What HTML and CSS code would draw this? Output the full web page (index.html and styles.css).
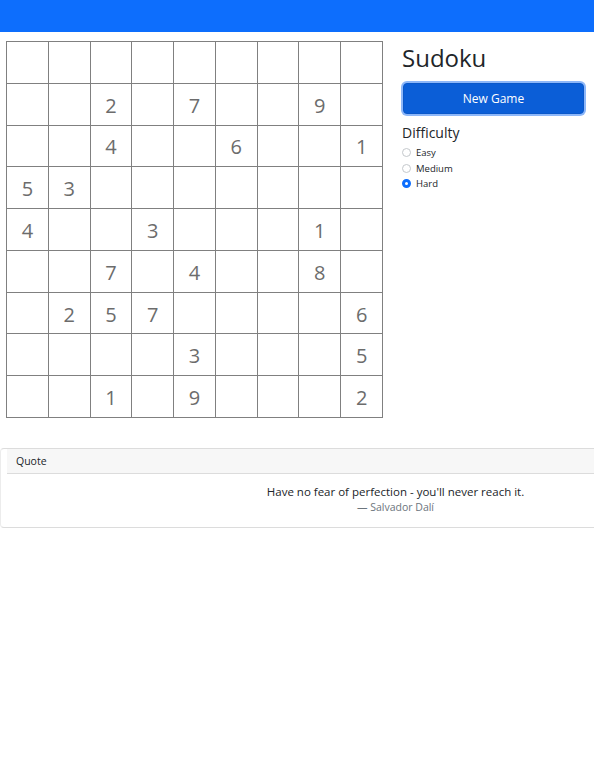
FILE: index.html
```html
<!DOCTYPE html>
<html>
<head>
<meta charset="utf-8">
<link rel="stylesheet" href="styles.css">
</head>
<body>
<div class="navbar"></div>
<div class="main">
  <div class="board">
    <div class="c"></div><div class="c"></div><div class="c"></div><div class="c"></div><div class="c"></div><div class="c"></div><div class="c"></div><div class="c"></div><div class="c"></div>
    <div class="c"></div><div class="c"></div><div class="c">2</div><div class="c"></div><div class="c">7</div><div class="c"></div><div class="c"></div><div class="c">9</div><div class="c"></div>
    <div class="c"></div><div class="c"></div><div class="c">4</div><div class="c"></div><div class="c"></div><div class="c">6</div><div class="c"></div><div class="c"></div><div class="c">1</div>
    <div class="c">5</div><div class="c">3</div><div class="c"></div><div class="c"></div><div class="c"></div><div class="c"></div><div class="c"></div><div class="c"></div><div class="c"></div>
    <div class="c">4</div><div class="c"></div><div class="c"></div><div class="c">3</div><div class="c"></div><div class="c"></div><div class="c"></div><div class="c">1</div><div class="c"></div>
    <div class="c"></div><div class="c"></div><div class="c">7</div><div class="c"></div><div class="c">4</div><div class="c"></div><div class="c"></div><div class="c">8</div><div class="c"></div>
    <div class="c"></div><div class="c">2</div><div class="c">5</div><div class="c">7</div><div class="c"></div><div class="c"></div><div class="c"></div><div class="c"></div><div class="c">6</div>
    <div class="c"></div><div class="c"></div><div class="c"></div><div class="c"></div><div class="c">3</div><div class="c"></div><div class="c"></div><div class="c"></div><div class="c">5</div>
    <div class="c"></div><div class="c"></div><div class="c">1</div><div class="c"></div><div class="c">9</div><div class="c"></div><div class="c"></div><div class="c"></div><div class="c">2</div>
  </div>
  <div class="side">
    <h1 class="title">Sudoku</h1>
    <button class="btn">New Game</button>
    <div class="diff-label">Difficulty</div>
    <div class="radios">
      <div class="opt"><span class="radio"></span><span>Easy</span></div>
      <div class="opt"><span class="radio"></span><span>Medium</span></div>
      <div class="opt"><span class="radio checked"></span><span>Hard</span></div>
    </div>
  </div>
</div>
<div class="card">
  <div class="card-header">Quote</div>
  <div class="card-body">
    <div class="quote">Have no fear of perfection - you'll never reach it.</div>
    <div class="author">— Salvador Dalí</div>
  </div>
</div>
</body>
</html>
```
FILE: styles.css
```css
html, body {
  margin: 0;
  padding: 0;
  background: #fff;
  font-family: "Open Sans", "Noto Sans", sans-serif;
  color: #212529;
  overflow: hidden;
}
.navbar {
  height: 32px;
  background: #0d6efd;
}
.main {
  display: flex;
  padding: 9px 0 0 6px;
}
.board {
  width: 377px;
  height: 377px;
  box-sizing: border-box;
  display: grid;
  grid-template-columns: repeat(9, 1fr);
  grid-template-rows: repeat(9, 1fr);
  gap: 1px;
  padding: 1px;
  background: #808080;
  flex: none;
}
.c {
  background: #fff;
  display: flex;
  align-items: center;
  justify-content: center;
  font-size: 20px;
  color: #6c6c6c;
  padding-top: 2px;
}
.side {
  margin-left: 19px;
  width: 183px;
  display: flex;
  flex-direction: column;
}
.title {
  margin: 0;
  font-size: 24px;
  font-weight: 400;
  line-height: 34px;
  color: #212529;
}
.btn {
  margin-top: 8px;
  height: 31px;
  border: 1px solid #0a58ca;
  border-radius: 4px;
  background: #0b5ed7;
  box-shadow: 0 0 0 2px #8db7f9;
  color: #fff;
  font-family: inherit;
  font-size: 12px;
  padding: 0;
  width: 181px;
  margin-left: 1px;
}
.diff-label {
  margin-top: 9px;
  font-size: 14px;
  line-height: 20px;
}
.radios {
  margin-top: 2px;
  display: flex;
  flex-direction: column;
}
.opt {
  display: flex;
  align-items: center;
  gap: 5px;
  font-size: 9.5px;
  line-height: 15.5px;
  color: #212529;
}
.radio {
  width: 9px;
  height: 9px;
  box-sizing: border-box;
  border-radius: 50%;
  border: 1px solid #c4c8cc;
  background: #fff;
}
.radio.checked {
  border: 3px solid #0d6efd;
  background: #fff;
}
.card {
  margin-top: 30px;
  border-top: 1px solid #dcdcdc;
  border-bottom: 1px solid #dcdcdc;
  border-left: 1px solid #ececec;
  border-radius: 4px 0 0 4px;
  height: 78px;
}
.card-header {
  margin-left: 6px;
  background: #f7f7f7;
  border-bottom: 1px solid #dcdcdc;
  height: 24px;
  padding-left: 9px;
  font-size: 10.5px;
  line-height: 25px;
  color: #212529;
}
.card-body {
  padding: 10px 0 0 196px;
  text-align: center;
}
.quote {
  font-size: 11.5px;
  line-height: 16px;
  color: #212529;
}
.author {
  font-size: 10.5px;
  line-height: 14px;
  color: #6c757d;
}
```
